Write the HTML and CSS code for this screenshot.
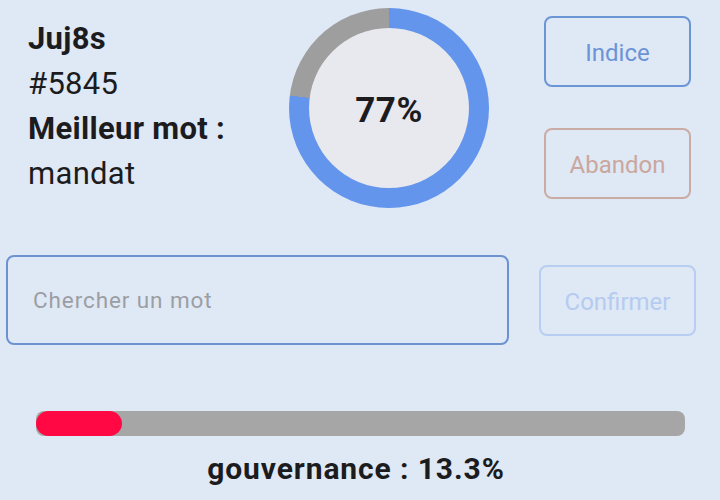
FILE: index.html
```html
<!DOCTYPE html>
<html lang="fr">
<head>
<meta charset="utf-8">
<link rel="stylesheet" href="styles.css">
</head>
<body>
<div class="app">
  <div class="top">
    <div class="info">
      <div class="name">Juj8s</div>
      <div class="num">#5845</div>
      <div class="label">Meilleur mot :</div>
      <div class="word">mandat</div>
    </div>
    <div class="ring">
      <div class="ring-inner">77%</div>
    </div>
    <div class="actions">
      <button class="btn btn-hint">Indice</button>
      <button class="btn btn-give">Abandon</button>
    </div>
  </div>
  <div class="search">
    <div class="field">Chercher un mot</div>
    <button class="btn btn-confirm">Confirmer</button>
  </div>
  <div class="result">
    <div class="bar"><div class="fill" style="width: 13.3%"></div></div>
    <div class="result-text">gouvernance : 13.3%</div>
  </div>
</div>
</body>
</html>
```
FILE: styles.css
```css
* { box-sizing: border-box; }
html, body {
  margin: 0;
  padding: 0;
  background: #dfe8f5;
  width: 720px;
  height: 500px;
  overflow: hidden;
  font-family: Roboto, "Liberation Sans", sans-serif;
  color: #1c1c1e;
}
.app { display: flex; flex-direction: column; }
.top {
  display: flex;
  align-items: flex-start;
  height: 230px;
}
.info {
  width: 289px;
  padding: 16px 0 0 28px;
  font-size: 31px;
  line-height: 45px;
  letter-spacing: 0.3px;
}
.name, .label { font-weight: 700; }
.ring {
  margin-top: 8px;
  width: 200px;
  height: 200px;
  border-radius: 50%;
  background: conic-gradient(#6495ed 0 77%, #9e9e9e 77% 100%);
  display: flex;
  align-items: center;
  justify-content: center;
}
.ring-inner {
  width: 160px;
  height: 160px;
  border-radius: 50%;
  background: #e8e8ef;
  display: flex;
  align-items: center;
  justify-content: center;
  padding-top: 4px;
  font-size: 35px;
  font-weight: 700;
  letter-spacing: 0.5px;
  color: #1c1c1e;
}
.actions {
  margin: 16px 0 0 55px;
  display: flex;
  flex-direction: column;
  gap: 41px;
}
.btn {
  font-family: Roboto, "Liberation Sans", sans-serif;
  background: transparent;
  border-radius: 8px;
  border: 2px solid;
  font-size: 24px;
  padding: 3px 0 0;
}
.btn-hint, .btn-give { width: 147px; height: 71px; }
.btn-hint { border-color: #6b96d6; color: #6b93d6; }
.btn-give { border-color: #cbaca4; color: #caa79d; }
.search {
  display: flex;
  align-items: center;
  padding-left: 6px;
  margin-top: 25px;
}
.field {
  width: 503px;
  height: 90px;
  border: 2px solid #6c93cf;
  border-radius: 8px;
  display: flex;
  align-items: center;
  padding-left: 25px;
  font-size: 22.5px;
  letter-spacing: 0.9px;
  color: #9b9ea3;
}
.btn-confirm {
  margin-left: 30px;
  width: 157px;
  height: 71px;
  border-color: #b7cdf1;
  color: #b5cbf0;
}
.result {
  margin-top: 66px;
  display: flex;
  flex-direction: column;
  align-items: center;
}
.bar {
  width: 649px;
  height: 25px;
  background: #a6a6a6;
  border-radius: 8px;
  overflow: hidden;
}
.fill {
  height: 100%;
  background: #ff0844;
  border-radius: 13px;
}
.result-text {
  margin-top: 13px;
  margin-right: 8px;
  font-size: 30px;
  font-weight: 700;
  line-height: 40px;
  letter-spacing: 0.9px;
}
```
